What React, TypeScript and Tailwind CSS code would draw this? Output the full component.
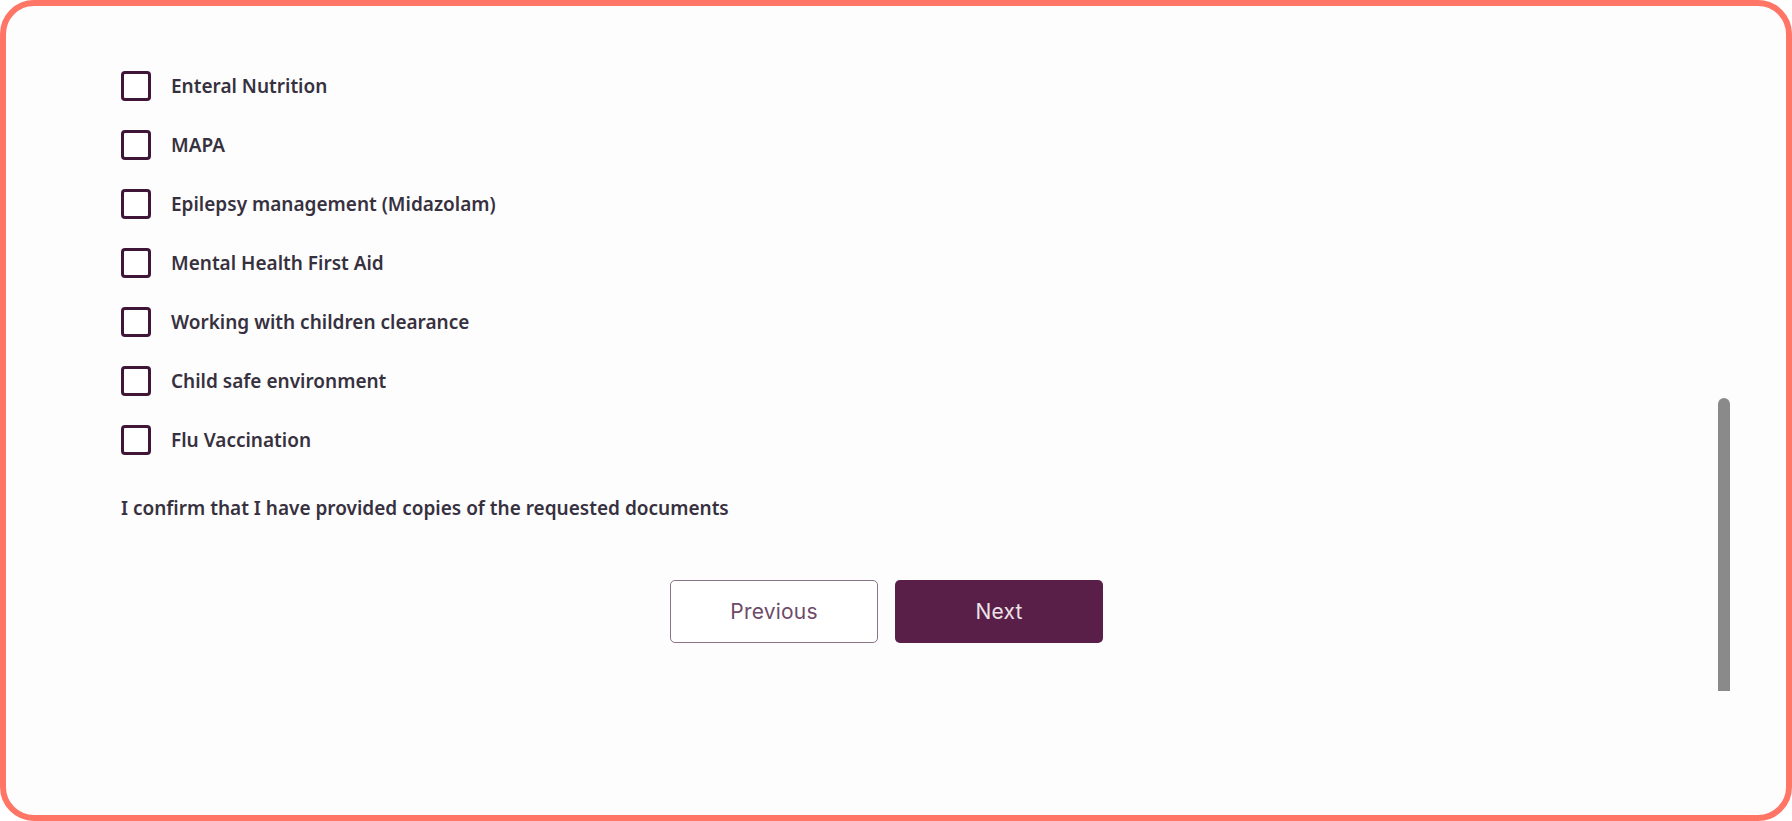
import React from "react";

const items = [
  "Enteral Nutrition",
  "MAPA",
  "Epilepsy management (Midazolam)",
  "Mental Health First Aid",
  "Working with children clearance",
  "Child safe environment",
  "Flu Vaccination",
];

export default function App() {
  return (
    <div className="w-full h-[821px] bg-white">
      <div className="relative w-full h-full border-[6px] border-[#ff7566] rounded-[34px] bg-[#fdfdfd] overflow-hidden">
        <div className="pl-[115px] pt-[65px] pr-[134px]" style={{ fontFamily: "'Noto Sans', Lato, sans-serif" }}>
          <div className="flex flex-col gap-[29px]">
            {items.map((t) => (
              <label key={t} className="flex items-center h-[30px]">
                <span className="w-[30px] h-[30px] shrink-0 rounded-[4px] border-[3px] border-[#3f1638] bg-white" />
                <span className="ml-[20px] text-[19px] font-semibold text-[#37313f] leading-[30px]">{t}</span>
              </label>
            ))}
          </div>
          <p className="mt-[39px] text-[19px] font-semibold text-[#37313f] leading-[28px]">
            I confirm that I have provided copies of the requested documents
          </p>
          <div className="mt-[58px] flex justify-center gap-[17px]" style={{ fontFamily: "Inter, 'Noto Sans', sans-serif" }}>
            <button className="w-[208px] h-[63px] rounded-[5px] border-[1.5px] border-[#8b7487] bg-white text-[21px] tracking-[0.2px] text-[#6e4a68]">
              Previous
            </button>
            <button className="w-[208px] h-[63px] rounded-[5px] bg-[#5a1f48] text-[21px] tracking-[0.2px] text-[#ebe3e8]">
              Next
            </button>
          </div>
        </div>
        <div className="absolute left-[1712px] top-[392px] w-[12px] h-[293px] rounded-t-full bg-[#8a8a8a]" />
      </div>
    </div>
  );
}
